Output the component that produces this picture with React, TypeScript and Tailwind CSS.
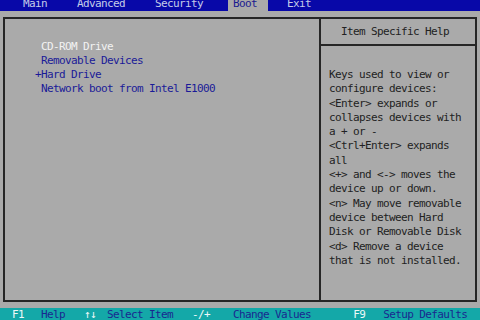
import React from "react";

const mono = "font-['DejaVu_Sans_Mono',monospace] text-[11px] tracking-[-0.62px]";

const helpLines = [
  "Keys used to view or",
  "configure devices:",
  "<Enter> expands or",
  "collapses devices with",
  "a + or -",
  "<Ctrl+Enter> expands",
  "all",
  "<+> and <-> moves the",
  "device up or down.",
  "<n> May move removable",
  "device between Hard",
  "Disk or Removable Disk",
  "<d> Remove a device",
  "that is not installed.",
];

export default function App() {
  return (
    <div className={`w-[480px] h-[320px] bg-[#aaaaaa] flex flex-col overflow-hidden ${mono}`}>
      {/* Top menu bar */}
      <div className="h-[11px] bg-[#0808a8] flex items-start overflow-hidden shrink-0">
        <span className="ml-[18px] px-[5px] leading-[8px] text-[#c4cce8] whitespace-pre">Main</span>
        <span className="ml-[20px] px-[5px] leading-[8px] text-[#c4cce8] whitespace-pre">Advanced</span>
        <span className="ml-[20px] px-[5px] leading-[8px] text-[#c4cce8] whitespace-pre">Security</span>
        <span className="ml-[20px] pl-[5px] pr-[11px] h-[11px] bg-[#aaaaaa] leading-[8px] text-[#1a1a90] whitespace-pre">Boot</span>
        <span className="ml-[14px] px-[5px] leading-[8px] text-[#c4cce8] whitespace-pre">Exit</span>
      </div>

      {/* Main box */}
      <div className="mt-[6px] mx-[3px] h-[285px] border-2 border-[#262626] flex shrink-0">
        {/* Left pane */}
        <div className="w-[314px] shrink-0 pt-[21px] pl-[30px] leading-[14px]">
          <div className="whitespace-pre text-[#f2f2f2]"> CD-ROM Drive</div>
          <div className="whitespace-pre text-[#1a1a98]"> Removable Devices</div>
          <div className="whitespace-pre text-[#1a1a98]">+Hard Drive</div>
          <div className="whitespace-pre text-[#1a1a98]"> Network boot from Intel E1000</div>
        </div>
        {/* Divider */}
        <div className="w-[2px] bg-[#262626] shrink-0" />
        {/* Right pane */}
        <div className="flex-1 flex flex-col">
          <div className="h-[25px] leading-[26px] pl-[20px] text-[#222222] whitespace-pre shrink-0">
            Item Specific Help
          </div>
          <div className="h-[2px] bg-[#262626] shrink-0" />
          <div className="pt-[22px] pl-[8px] leading-[14.3px] text-[#222222]">
            {helpLines.map((l, i) => (
              <div key={i} className="whitespace-pre">{l}</div>
            ))}
          </div>
        </div>
      </div>

      {/* Footer */}
      <div className="mt-[6px] h-[12px] bg-[#14a8a8] flex items-start overflow-hidden shrink-0 leading-[14px]">
        <span className="ml-[12px] text-[#eef8f8] whitespace-pre">F1</span>
        <span className="ml-[17px] text-[#1a2890] whitespace-pre">Help</span>
        <span className="ml-[19px] text-[#eef8f8] whitespace-pre">↑↓</span>
        <span className="ml-[11px] text-[#1a2890] whitespace-pre">Select Item</span>
        <span className="ml-[19px] text-[#eef8f8] whitespace-pre">-/+</span>
        <span className="ml-[23px] text-[#1a2890] whitespace-pre">Change Values</span>
        <span className="ml-[42px] text-[#eef8f8] whitespace-pre">F9</span>
        <span className="ml-[18px] text-[#1a2890] whitespace-pre">Setup Defaults</span>
      </div>
    </div>
  );
}
